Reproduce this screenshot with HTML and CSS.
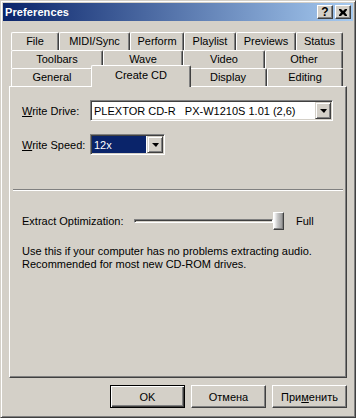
FILE: index.html
```html
<!DOCTYPE html>
<html lang="en">
<head>
    <meta charset="UTF-8">
    <title>Preferences</title>
    <link rel="stylesheet" href="styles.css">
</head>
<body>
    <div class="window">
        <div class="titlebar">
            <span class="title">Preferences</span>
            <span class="tb-btn help">?</span>
            <span class="tb-btn close">
                <svg width="8" height="7" viewBox="0 0 8 7"><path d="M0 0h2l2 2 2-2h2v1l-2 2.5 2 2.5v1h-2l-2-2-2 2h-2v-1l2-2.5-2-2.5z" fill="#000"/></svg>
            </span>
        </div>

        <div class="dialog">
            <div class="tabs">
                <div class="tab-row row1">
                    <div class="tab">File</div>
                    <div class="tab">MIDI/Sync</div>
                    <div class="tab">Perform</div>
                    <div class="tab">Playlist</div>
                    <div class="tab">Previews</div>
                    <div class="tab">Status</div>
                </div>
                <div class="tab-row row2">
                    <div class="tab">Toolbars</div>
                    <div class="tab">Wave</div>
                    <div class="tab">Video</div>
                    <div class="tab">Other</div>
                </div>
                <div class="tab-row row3">
                    <div class="tab">General</div>
                    <div class="tab selected">Create CD</div>
                    <div class="tab">Display</div>
                    <div class="tab">Editing</div>
                </div>
            </div>

            <div class="panel">
                <div class="field">
                    <label class="field-label"><u>W</u>rite Drive:</label>
                    <div class="combo drive">
                        <span class="combo-text">PLEXTOR CD-R   PX-W1210S 1.01 (2,6)</span>
                        <span class="combo-btn"><span class="arrow"></span></span>
                    </div>
                </div>
                <div class="field speed-field">
                    <label class="field-label"><u>W</u>rite Speed:</label>
                    <div class="combo speed">
                        <span class="combo-text focused">12x</span>
                        <span class="combo-btn"><span class="arrow"></span></span>
                    </div>
                </div>

                <div class="separator"></div>

                <div class="slider-row">
                    <span class="slider-label">Extract Optimization:</span>
                    <div class="slider">
                        <div class="track"></div>
                        <div class="thumb"></div>
                    </div>
                    <span class="slider-value">Full</span>
                </div>

                <p class="note">Use this if your computer has no problems extracting audio.<br>Recommended for most new CD-ROM drives.</p>
            </div>

            <div class="buttons">
                <button class="btn default">OK</button>
                <button class="btn">Отмена</button>
                <button class="btn">При<u>м</u>енить</button>
            </div>
        </div>
    </div>
</body>
</html>
```

FILE: styles.css
```css
body { margin: 0; font-family: "Liberation Sans", Arial, sans-serif; font-size: 11px; color: #000; background: #d4d0c8; }

.window { width: 356px; height: 418px; box-sizing: border-box; background: #d4d0c8; padding: 2px;
    border: 1px solid; border-color: #d4d0c8 #404040 #404040 #d4d0c8;
    box-shadow: inset 1px 1px #fff, inset -1px -1px #808080; }

.titlebar { height: 18px; display: flex; align-items: center; padding: 0 2px;
    background: linear-gradient(to right, #0a246a, #a6caf0); }
.title { color: #fff; font-weight: bold; font-size: 11px; flex: 1; letter-spacing: 0.1px; }
.tb-btn { width: 16px; height: 14px; box-sizing: border-box; background: #d4d0c8; display: flex; align-items: center; justify-content: center;
    border: 1px solid; border-color: #fff #404040 #404040 #fff; box-shadow: inset -1px -1px #808080; }
.tb-btn.help { font-weight: bold; font-size: 12px; line-height: 12px; margin-right: 2px; }

.dialog { padding: 11px 6px 0 6px; }

.tabs { padding: 0 4px 0 2px; }
.tab-row { display: flex; height: 18px; }
.tab { height: 18px; box-sizing: border-box; display: flex; align-items: center; justify-content: center; background: #d4d0c8;
    border-top: 1px solid #fff; border-left: 1px solid #fff; border-right: 1px solid #404040;
    border-radius: 2px 2px 0 0; box-shadow: inset -1px 0 #808080; padding-bottom: 1px; }

.row1 .tab:nth-child(1) { width: 48px; }
.row1 .tab:nth-child(2) { width: 71px; }
.row1 .tab:nth-child(3) { width: 54px; }
.row1 .tab:nth-child(4) { width: 52px; }
.row1 .tab:nth-child(5) { width: 60px; }
.row1 .tab:nth-child(6) { width: 47px; }
.row2 .tab:nth-child(1) { width: 92px; }
.row2 .tab:nth-child(2) { width: 80px; }
.row2 .tab:nth-child(3) { width: 82px; }
.row2 .tab:nth-child(4) { width: 78px; }
.row3 .tab:nth-child(1) { width: 82px; }
.row3 .tab:nth-child(2) { width: 96px; }
.row3 .tab:nth-child(3) { width: 78px; }
.row3 .tab:nth-child(4) { width: 76px; }

.tab.selected { width: 100px !important; height: 22px; margin: -3px -2px -1px; z-index: 1; padding-bottom: 3px; }

.panel { height: 292px; box-sizing: border-box; padding: 13px 12px 0 12px;
    border: 1px solid; border-color: #fff #404040 #404040 #fff; box-shadow: inset -1px -1px #808080; }

.field { display: flex; align-items: center; height: 21px; }
.speed-field { margin-top: 13px; }
.field-label { width: 68px; flex: none; }

.combo { height: 21px; box-sizing: border-box; display: flex; background: #fff; padding: 0;
    border: 1px solid; border-color: #808080 #fff #fff #808080; box-shadow: inset 1px 1px #404040, inset -1px -1px #d4d0c8; }
.combo.drive { width: 243px; }
.combo.speed { width: 75px; }
.combo-text { flex: 1; margin: 1px 0 1px 1px; padding-left: 2px; display: flex; align-items: center; white-space: pre; }
.combo-text.focused { background: #0a246a; color: #fff; margin-right: 1px; }
.combo-btn { width: 16px; height: 17px; margin: 1px 1px 1px 0; box-sizing: border-box; background: #d4d0c8; display: flex; align-items: center; justify-content: center;
    border: 1px solid; border-color: #d4d0c8 #404040 #404040 #d4d0c8; box-shadow: inset 1px 1px #fff, inset -1px -1px #808080; }
.arrow { width: 0; height: 0; border-left: 4px solid transparent; border-right: 3px solid transparent; border-top: 4px solid #000; margin-top: 1px; }

.separator { margin: 34px -9px 0; height: 0; border-top: 1px solid #808080; border-bottom: 1px solid #fff; }

.slider-row { display: flex; align-items: center; height: 18px; margin-top: 21px; }
.slider-label { width: 112px; flex: none; }
.slider { display: flex; align-items: center; width: 150px; }
.track { width: 139px; height: 4px; box-sizing: border-box; border: 1px solid; border-color: #808080 #fff #fff #808080; box-shadow: inset 1px 1px #404040; }
.thumb { width: 11px; height: 18px; box-sizing: border-box; border: 1px solid; border-color: #fff #404040 #404040 #fff;
    box-shadow: inset -1px -1px #808080; background: linear-gradient(to right, #fff, #c8c8c8 40%, #909090); }
.slider-value { margin-left: 12px; }

.note { margin: 15px 0 0; line-height: 13px; }

.buttons { display: flex; justify-content: flex-end; gap: 6px; margin-top: 7px; }
.btn { width: 75px; height: 23px; box-sizing: border-box; background: #d4d0c8; font-family: inherit; font-size: 11px; color: #000; padding: 0;
    border: 1px solid; border-color: #fff #404040 #404040 #fff; box-shadow: inset -1px -1px #808080; }
.btn.default { border-color: #000; box-shadow: inset 1px 1px #fff, inset -1px -1px #404040, inset -2px -2px #808080; }
```
